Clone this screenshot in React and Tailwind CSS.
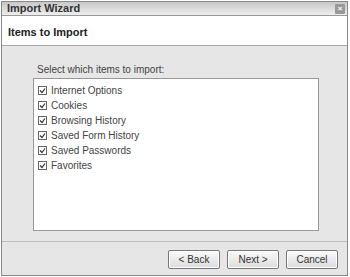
import React from 'react';

const items = [
  'Internet Options',
  'Cookies',
  'Browsing History',
  'Saved Form History',
  'Saved Passwords',
  'Favorites',
];

const Check = () => (
  <span className="flex h-[9px] w-[9px] items-center justify-center border border-[#666] bg-white">
    <svg width="7" height="7" viewBox="0 0 7 7">
      <path d="M1 3.5 L3 5.5 L6 1.5" fill="none" stroke="#333" strokeWidth="1.2" />
    </svg>
  </span>
);

const Btn = ({ children }) => (
  <button className="flex h-[19px] w-[52px] items-center justify-center rounded-[2px] border border-[#777] bg-gradient-to-b from-[#fafafa] to-[#dcdcdc] text-[10px] text-[#333] shadow-[inset_0_0_0_1px_#fff]">
    {children}
  </button>
);

export default function App() {
  return (
    <div className="h-[277px] w-[350px] bg-white p-[1px] font-['Liberation_Sans',Arial,sans-serif]">
      <div className="flex h-[275px] w-[347px] flex-col border border-[#888] bg-[#e6e6e6]">
        <div className="flex h-[14px] items-center justify-between border-b border-[#999] bg-gradient-to-b from-[#c8c8c8] to-[#eeeeee] pl-[5px] pr-[2px]">
          <span className="text-[11px] font-bold text-[#333]">Import Wizard</span>
          <span className="flex h-[10px] w-[10px] items-center justify-center rounded-[1px] bg-[#999] text-[8px] leading-none font-bold text-white">×</span>
        </div>
        <div className="h-[30px] border-b border-[#aaa] bg-white pl-[6px] pt-[3px]">
          <span className="text-[11px] font-bold text-[#222]">Items to Import</span>
        </div>
        <div className="flex flex-1 flex-col pl-[31px] pr-[28px] pt-[18px]">
          <div className="pl-[4px] text-[10px] text-[#444] leading-[12px]">Select which items to import:</div>
          <div className="mt-[2px] h-[153px] border border-[#999] bg-white pl-[4px] pt-[4px]">
            {items.map((t) => (
              <div key={t} className="flex h-[15px] items-center gap-[4px] text-[10px] text-[#444]">
                <Check />
                <span>{t}</span>
              </div>
            ))}
          </div>
        </div>
        <div className="flex h-[34px] items-center justify-end gap-[7px] border-t border-[#bbb] pr-[9px] pt-[1px]">
          <Btn>&lt; Back</Btn>
          <Btn>Next &gt;</Btn>
          <Btn>Cancel</Btn>
        </div>
      </div>
    </div>
  );
}
